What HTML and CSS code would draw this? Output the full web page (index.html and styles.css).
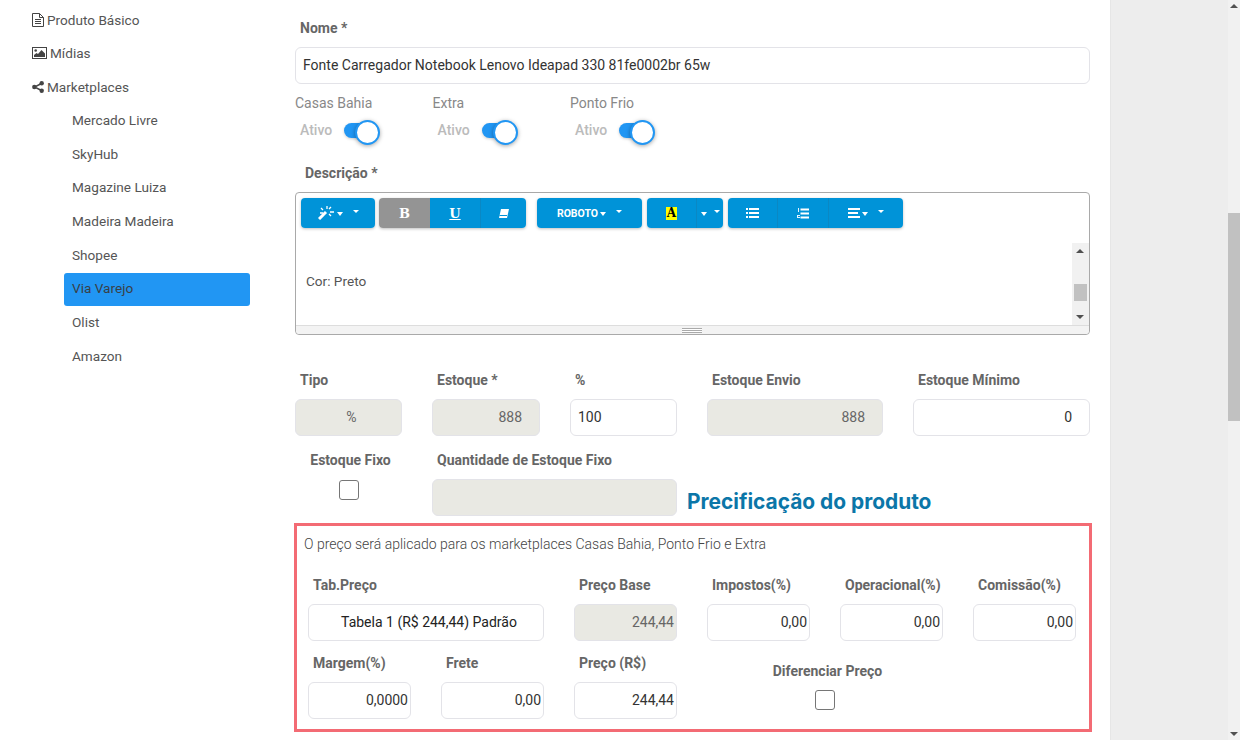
FILE: index.html
```html
<!DOCTYPE html>
<html lang="pt-BR">
<head>
<meta charset="UTF-8">
<title>Produto - Via Varejo</title>
<link rel="stylesheet" href="styles.css">
</head>
<body>
<div class="page">
    <aside class="sidebar">
        <a class="menu-item">
            <svg class="menu-icon" viewBox="0 0 12 14"><path d="M.5.5h7l4 4v9H.5z" fill="none" stroke="#444"/><path d="M7.5.5v4h4M3 6.5h6M3 8.5h6M3 10.5h6" fill="none" stroke="#444"/></svg>
            Produto Básico
        </a>
        <a class="menu-item">
            <svg class="menu-icon wide" viewBox="0 0 15 12"><rect x=".5" y=".5" width="14" height="11" fill="none" stroke="#444"/><circle cx="3.7" cy="3.5" r="1.3" fill="#444"/><path d="M2 10V8l2.5-2 1.5 1 3.5-4L13 6.5V10z" fill="#444"/></svg>
            Mídias
        </a>
        <a class="menu-item">
            <svg class="menu-icon" viewBox="0 0 12 12"><path d="M9.5 2.5l-7 3.5 7 3.5" fill="none" stroke="#444" stroke-width="1.4"/><circle cx="9.7" cy="2.3" r="2.2" fill="#444"/><circle cx="2.3" cy="6" r="2.2" fill="#444"/><circle cx="9.7" cy="9.7" r="2.2" fill="#444"/></svg>
            Marketplaces
        </a>
        <div class="sub-menu">
            <a class="sub-item">Mercado Livre</a>
            <a class="sub-item">SkyHub</a>
            <a class="sub-item">Magazine Luiza</a>
            <a class="sub-item">Madeira Madeira</a>
            <a class="sub-item">Shopee</a>
            <a class="sub-item active">Via Varejo</a>
            <a class="sub-item">Olist</a>
            <a class="sub-item">Amazon</a>
        </div>
    </aside>

    <main class="content">
        <div class="field-name">
            <label class="label">Nome *</label>
            <div class="input">Fonte Carregador Notebook Lenovo Ideapad 330 81fe0002br 65w</div>
        </div>

        <div class="switches">
            <div class="switch-col">
                <div class="switch-title">Casas Bahia</div>
                <div class="switch-row"><span class="switch-label">Ativo</span><span class="switch"></span></div>
            </div>
            <div class="switch-col">
                <div class="switch-title">Extra</div>
                <div class="switch-row"><span class="switch-label">Ativo</span><span class="switch"></span></div>
            </div>
            <div class="switch-col">
                <div class="switch-title">Ponto Frio</div>
                <div class="switch-row"><span class="switch-label">Ativo</span><span class="switch"></span></div>
            </div>
        </div>

        <label class="label desc-label">Descrição *</label>
        <div class="editor">
            <div class="toolbar">
                <div class="btn-group">
                    <span class="btn w74">
                        <svg width="17" height="14" viewBox="0 0 17 14"><path d="M1 13l7-7" stroke="#fff" stroke-width="3"/><path d="M9 0v3M3 2l2 2M13 1l-2 2M16 6h-4M5 7H2M11 8l2 2" stroke="#fff" stroke-width="1.3"/></svg>
                        <i class="mini-caret"></i><i class="caret"></i>
                    </span>
                </div>
                <div class="btn-group">
                    <span class="btn w51 pressed"><b class="serif">B</b></span>
                    <span class="btn w51"><b class="serif under">U</b></span>
                    <span class="btn w45">
                        <svg width="11" height="9" viewBox="0 0 11 9"><path d="M3 0h8L9 9H1z" fill="#fff"/><path d="M1.5 6.5H9" stroke="#0093d8"/></svg>
                    </span>
                </div>
                <div class="btn-group">
                    <span class="btn w105 font-btn">ROBOTO<i class="mini-caret"></i><i class="caret"></i></span>
                </div>
                <div class="btn-group">
                    <span class="btn w50"><b class="serif color-a">A</b></span>
                    <span class="btn w26"><i class="mini-caret"></i><i class="caret corner"></i></span>
                </div>
                <div class="btn-group">
                    <span class="btn w50">
                        <svg width="13" height="10" viewBox="0 0 13 10"><path d="M0 1h2M0 5h2M0 9h2M3 1h10M3 5h10M3 9h10" stroke="#fff" stroke-width="2"/></svg>
                    </span>
                    <span class="btn w51">
                        <svg width="12" height="11" viewBox="0 0 12 11"><path d="M1 0h1v4H1zM0 7h3v1H1v1h2v1H0z" fill="#e4f4ff"/><path d="M3.5 1.5H12M3.5 5.5H12M3.5 9.5H12" stroke="#fff" stroke-width="1.8"/></svg>
                    </span>
                    <span class="btn w74">
                        <svg width="12" height="10" viewBox="0 0 12 10"><path d="M0 1h12M0 5h10M0 9h12" stroke="#fff" stroke-width="2"/></svg>
                        <i class="mini-caret"></i><i class="caret"></i>
                    </span>
                </div>
            </div>
            <div class="editor-body">
                <div class="editor-text">
                    <p class="color-line">Cor: Preto</p>
                </div>
                <div class="scroll-small">
                    <i class="arrow-up"></i>
                    <span class="thumb-small"></span>
                    <i class="arrow-down"></i>
                </div>
            </div>
            <div class="resize-bar"><span class="grip"></span></div>
        </div>

        <div class="grid-stock">
            <div class="cell">
                <label class="label">Tipo</label>
                <div class="input off center shift">%</div>
            </div>
            <div class="cell">
                <label class="label">Estoque *</label>
                <div class="input off right">888</div>
            </div>
            <div class="cell">
                <label class="label">%</label>
                <div class="input">100</div>
            </div>
            <div class="cell">
                <label class="label">Estoque Envio</label>
                <div class="input off right">888</div>
            </div>
            <div class="cell">
                <label class="label">Estoque Mínimo</label>
                <div class="input right">0</div>
            </div>
        </div>

        <div class="grid-fixed">
            <div class="cell cell-check">
                <label class="label">Estoque Fixo</label>
                <span class="checkbox"></span>
            </div>
            <div class="cell">
                <label class="label">Quantidade de Estoque Fixo</label>
                <div class="input off"></div>
            </div>
            <h2 class="section-title">Precificação do produto</h2>
        </div>

        <section class="price-box">
            <p class="price-note">O preço será aplicado para os marketplaces Casas Bahia, Ponto Frio e Extra</p>
            <div class="grid-price">
                <div class="cell span2">
                    <label class="label">Tab.Preço</label>
                    <div class="input center shift dark">Tabela 1 (R$ 244,44) Padrão</div>
                </div>
                <div class="cell">
                    <label class="label">Preço Base</label>
                    <div class="input off num">244,44</div>
                </div>
                <div class="cell">
                    <label class="label">Impostos(%)</label>
                    <div class="input num">0,00</div>
                </div>
                <div class="cell">
                    <label class="label">Operacional(%)</label>
                    <div class="input num">0,00</div>
                </div>
                <div class="cell">
                    <label class="label">Comissão(%)</label>
                    <div class="input num">0,00</div>
                </div>
                <div class="cell">
                    <label class="label">Margem(%)</label>
                    <div class="input num">0,0000</div>
                </div>
                <div class="cell">
                    <label class="label">Frete</label>
                    <div class="input num">0,00</div>
                </div>
                <div class="cell">
                    <label class="label">Preço (R$)</label>
                    <div class="input num">244,44</div>
                </div>
                <div class="cell span2 cell-diff">
                    <label class="label">Diferenciar Preço</label>
                    <span class="checkbox"></span>
                </div>
            </div>
        </section>
    </main>

    <div class="gutter"></div>
    <div class="page-scroll">
        <i class="arrow-up"></i>
        <div class="page-track"><span class="page-thumb"></span></div>
        <i class="arrow-down"></i>
    </div>
</div>
</body>
</html>
```

FILE: styles.css
```css
* {
    box-sizing: border-box;
}
html, body {
    margin: 0;
    height: 740px;
    overflow: hidden;
}
body {
    font-family: Roboto, "Liberation Sans", sans-serif;
    font-size: 14px;
    color: #444;
    background-color: #fff;
}
.page {
    display: flex;
    height: 740px;
    overflow: hidden;
}

/* sidebar */
.sidebar {
    width: 280px;
    flex: none;
    padding: 3px 30px 0 32px;
    font-size: 13.6px;
}
.menu-item {
    display: flex;
    align-items: center;
    height: 33.5px;
    color: #555;
    gap: 3px;
}
.menu-icon {
    width: 12px;
    height: 14px;
}
.menu-icon.wide {
    width: 15px;
    height: 12px;
}
.sub-menu {
    margin: 1.5px 0 0 32px;
}
.sub-item {
    display: flex;
    align-items: center;
    height: 33px;
    margin-bottom: 0.7px;
    padding: 0 0 3px 8px;
    color: #555;
}
.sub-item.active {
    background-color: #2196f3;
    color: #3a3f46;
    border-radius: 3px;
}

/* main column */
.content {
    width: 830px;
    flex: none;
    padding: 0 20px 0 15px;
}
.label {
    display: block;
    font-weight: 700;
    color: #666;
    line-height: 16px;
}
.input {
    height: 37px;
    padding: 0 7px;
    border: 1px solid #e3e3e8;
    border-radius: 6px;
    background-color: #fff;
    color: #333;
    line-height: 35px;
    white-space: nowrap;
}
.input.off {
    background-color: #e9e9e3;
    color: #666;
}
.input.center {
    text-align: center;
}
.input.shift {
    padding-left: 13px;
}
.input.right {
    text-align: right;
    padding-right: 17px;
}
.input.num {
    text-align: right;
    padding-right: 2px;
}
.input.dark {
    color: #222;
}
.field-name {
    padding-top: 20px;
}
.field-name .label {
    padding-left: 5px;
    margin-bottom: 11px;
}

/* switches */
.switches {
    display: flex;
    margin-top: 11px;
}
.switch-col {
    width: 137.5px;
}
.switch-title {
    line-height: 16px;
    color: #888;
}
.switch-row {
    display: flex;
    align-items: center;
    gap: 12px;
    margin-top: 8px;
    padding-left: 5px;
    height: 22px;
}
.switch-label {
    font-weight: 500;
    color: #bbb;
}
.switch {
    position: relative;
    width: 30px;
    height: 15px;
    border-radius: 8px;
    background-color: #2196f3;
    box-shadow: 0 1px 3px rgba(0, 0, 0, 0.2);
}
.switch::after {
    content: "";
    position: absolute;
    top: -3px;
    right: -6px;
    width: 21px;
    height: 21px;
    border-radius: 50%;
    border: 2px solid #2196f3;
    background-color: #fff;
    box-shadow: 0 1px 4px rgba(0, 0, 0, 0.35);
}
.desc-label {
    margin: 24px 0 11px 10px;
}

/* editor */
.editor {
    height: 143px;
    border: 1px solid #a9a9a9;
    border-radius: 4px;
    display: flex;
    flex-direction: column;
}
.toolbar {
    display: flex;
    height: 50px;
    gap: 4px;
    padding: 5px 0 0 5px;
}
.btn-group {
    display: flex;
    height: 30px;
    border-radius: 4px;
    box-shadow: 0 1px 3px rgba(0, 0, 0, 0.25);
}
.btn-group:nth-child(3) {
    margin-left: 7px;
    margin-right: 1px;
}
.btn-group:nth-child(5) {
    margin-left: 1px;
}
.btn {
    display: flex;
    align-items: center;
    justify-content: center;
    gap: 2px;
    height: 30px;
    background-color: #0093d8;
    color: #fff;
    border-right: 1px solid #0a88c4;
}
.btn:first-child {
    border-radius: 4px 0 0 4px;
}
.btn:last-child {
    border-radius: 0 4px 4px 0;
    border-right: 0;
}
.btn:only-child {
    border-radius: 4px;
}
.btn.pressed {
    background-color: #949494;
    border-right: 0;
}
.w26 { width: 26px; }
.w45 { width: 45px; }
.w50 { width: 50px; }
.w51 { width: 51px; }
.w74 { width: 74px; }
.w105 { width: 105px; }
.serif {
    font-family: "DejaVu Serif", "Liberation Serif", serif;
    font-size: 13px;
}
.under {
    text-decoration: underline;
}
.color-a {
    width: 11px;
    background-color: #ff0;
    color: #000;
    font-size: 12px;
    text-align: center;
    line-height: 13px;
}
.font-btn {
    font-size: 10.5px;
    font-weight: 700;
}
.mini-caret {
    width: 0;
    height: 0;
    border-left: 3px solid transparent;
    border-right: 3px solid transparent;
    border-top: 4px solid #fff;
    margin-top: 2px;
}
.caret {
    width: 0;
    height: 0;
    border-left: 3px solid transparent;
    border-right: 3px solid transparent;
    border-top: 3px solid #fff;
    margin: -3px 0 0 8px;
}
.caret.corner {
    margin-left: 5px;
}
.editor-body {
    display: flex;
    height: 82px;
    overflow: hidden;
}
.editor-text {
    flex: 1;
    padding-left: 10px;
    font-size: 13.6px;
    color: #555;
}
.editor-text p {
    margin: 0;
    line-height: 20px;
}
.color-line {
    padding-top: 28px;
}
.scroll-small {
    position: relative;
    width: 17px;
    background-color: #f1f1f1;
}
.scroll-small .arrow-up {
    position: absolute;
    top: 6px;
    left: 4px;
}
.scroll-small .arrow-down {
    position: absolute;
    bottom: 6px;
    left: 4px;
}
.thumb-small {
    position: absolute;
    left: 2px;
    top: 41px;
    width: 13px;
    height: 17px;
    background-color: #c1c1c1;
}
.arrow-up, .arrow-down {
    display: block;
    width: 0;
    height: 0;
    border-left: 4px solid transparent;
    border-right: 4px solid transparent;
}
.arrow-up {
    border-bottom: 4px solid #505050;
}
.arrow-down {
    border-top: 4px solid #505050;
}
.resize-bar {
    flex: 1;
    display: flex;
    align-items: center;
    justify-content: center;
    background-color: #f3f3f3;
    border-top: 1px solid #ddd;
    border-radius: 0 0 4px 4px;
}
.grip {
    width: 20px;
    height: 5px;
    margin-left: -2px;
    border-top: 1px solid #aaa;
    border-bottom: 1px solid #aaa;
    background: linear-gradient(#fff 0 1px, #aaa 1px 2px, #fff 2px);
}

/* stock rows */
.cell {
    padding: 0 15px;
}
.cell .label {
    padding-left: 5px;
    margin-bottom: 11px;
}
.grid-stock {
    display: grid;
    grid-template-columns: 137px 138px 137px 206px 207px;
    width: 825px;
    margin: 37px 0 0 -15px;
}
.grid-fixed {
    display: grid;
    grid-template-columns: 137px 275px 1fr;
    width: 825px;
    margin: 16px 0 0 -15px;
}
.cell-check {
    text-align: center;
}
.cell-check .label {
    padding-left: 4px;
    margin-bottom: 12px;
    white-space: nowrap;
}
.checkbox {
    display: block;
    width: 20px;
    height: 20px;
    margin: 0 auto;
    border: 1px solid #767676;
    border-radius: 3px;
    background-color: #fff;
}
.section-title {
    margin: 37px 0 0 -5px;
    font-family: Inter, Roboto, sans-serif;
    font-size: 20.9px;
    line-height: 26px;
    font-weight: 700;
    color: #0b76a8;
    white-space: nowrap;
}

/* pricing box */
.price-box {
    width: 798px;
    height: 209px;
    margin: 7px 0 0 -1px;
    border: 3px solid #f36b74;
}
.price-note {
    margin: 0;
    padding: 10px 0 0 7px;
    font-weight: 300;
    line-height: 16px;
    color: #444;
}
.grid-price {
    display: grid;
    grid-template-columns: repeat(6, 133px);
    grid-auto-rows: 78px;
    margin: 25px 0 0 -4px;
}
.span2 {
    grid-column: span 2;
}
.cell-diff {
    padding-top: 8px;
    text-align: center;
}
.cell-diff .label {
    padding-left: 5px;
    margin-bottom: 11px;
}

/* right side */
.gutter {
    width: 118px;
    flex: none;
    background-color: #ededed;
    border-left: 1px solid #e6e6e6;
}
.page-scroll {
    width: 12px;
    flex: none;
    display: flex;
    flex-direction: column;
    align-items: center;
    background-color: #f1f1f1;
    padding: 4px 0;
}
.page-track {
    position: relative;
    flex: 1;
    width: 12px;
}
.page-thumb {
    position: absolute;
    top: 205px;
    left: 0;
    width: 12px;
    height: 208px;
    background-color: #c1c1c1;
}
```
